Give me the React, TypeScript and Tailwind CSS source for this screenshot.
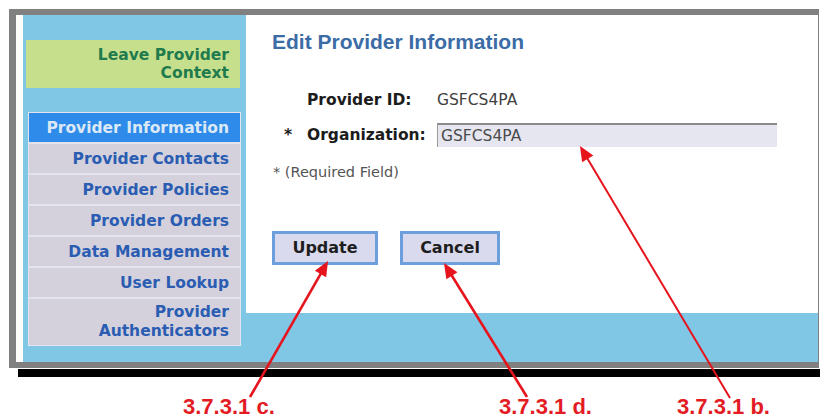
const navItems = [
  "Provider Contacts",
  "Provider Policies",
  "Provider Orders",
  "Data Management",
  "User Lookup",
]

function Arrow({ x1, y1, x2, y2, w }: { x1: number; y1: number; x2: number; y2: number; w: number }) {
  // arrowhead drawn as a triangle at (x2, y2)
  const dx = x2 - x1
  const dy = y2 - y1
  const len = Math.sqrt(dx * dx + dy * dy)
  const ux = dx / len
  const uy = dy / len
  const hl = 15
  const hw = 6.5
  const bx = x2 - ux * hl
  const by = y2 - uy * hl
  const pts = `${x2},${y2} ${bx - uy * hw},${by + ux * hw} ${bx + uy * hw},${by - ux * hw}`
  return (
    <g>
      <line x1={x1} y1={y1} x2={bx + ux * 2} y2={by + uy * 2} stroke="#e5141d" strokeWidth={w} />
      <polygon points={pts} fill="#e5141d" />
    </g>
  )
}

export default function App() {
  return (
    <div className="relative w-[820px] h-[419px] overflow-hidden bg-white pl-[9px] pt-[9px] font-['DejaVu_Sans',sans-serif]">
      <div className="flex w-[810px] border-t-[6px] border-l-[7px] border-b-[6px] border-r border-[#808080]">
        <div className="w-[7px] bg-white" />
        <div className="flex h-[347px] flex-1 bg-[#80c7e6]">
          {/* sidebar */}
          <div className="flex w-[223px] flex-col">
            <div className="ml-[3px] mt-[25px] flex h-[48px] w-[214px] flex-col justify-center bg-[#c6df8c] pr-[11px] text-right text-[15.5px] font-bold leading-[18px] text-[#1f7b4d]">
              <span>Leave Provider</span>
              <span>Context</span>
            </div>
            <div className="ml-[5px] mt-[24px] flex w-[213px] flex-col gap-[2px] border border-[#e4e4ee] bg-[#e4e4ee] text-right text-[15.5px] font-bold leading-[18px]">
              <div className="flex h-[29px] items-center justify-end bg-[#2f8bea] pr-[11px] text-[#dbe9f7]">
                Provider Information
              </div>
              {navItems.map((t) => (
                <div key={t} className="flex h-[29px] items-center justify-end bg-[#d4d1dd] pr-[11px] text-[#2a5db2]">
                  {t}
                </div>
              ))}
              <div className="flex h-[46px] flex-col justify-center bg-[#d4d1dd] pr-[11px] leading-[19px] text-[#2a5db2]">
                <span>Provider</span>
                <span>Authenticators</span>
              </div>
            </div>
          </div>

          {/* main */}
          <div className="flex flex-1 flex-col">
            <div className="h-[298px] bg-white pl-[26px] pt-[15px]">
              <h1 className="font-['Liberation_Sans',Arial,sans-serif] text-[21px] font-bold leading-[24px] text-[#3b6ca6]">
                Edit Provider Information
              </h1>
              <div className="mt-[36px] ml-[12px] flex h-[20px] items-center text-[15.5px] leading-[20px]">
                <span className="w-[23px]" />
                <span className="w-[130px] font-bold text-[#1c1c1c]">Provider ID:</span>
                <span className="text-[#404040]">GSFCS4PA</span>
              </div>
              <div className="mt-[13px] ml-[12px] flex h-[24px] items-center text-[15.5px] leading-[20px]">
                <span className="w-[23px] font-bold text-[#1c1c1c]">*</span>
                <span className="w-[130px] font-bold text-[#1c1c1c]">Organization:</span>
                <div className="flex h-[24px] w-[340px] items-center border-t-2 border-l border-t-[#8b8b8b] border-l-[#9a9a9a] bg-[#e6e6f0] pl-[3px] text-[#4a4a4a]">
                  GSFCS4PA
                </div>
              </div>
              <p className="mt-[16px] ml-[1px] text-[14.5px] leading-[18px] text-[#555]">* (Required Field)</p>
              <div className="mt-[50px] flex gap-[22px] text-[16px] font-bold text-[#1e1e1e]">
                <button className="flex h-[34px] w-[106px] items-center justify-center border-[3px] border-[#6d9fdd] bg-[#dadaee]">
                  Update
                </button>
                <button className="flex h-[34px] w-[100px] items-center justify-center border-[3px] border-[#6d9fdd] bg-[#dadaee]">
                  Cancel
                </button>
              </div>
            </div>
          </div>
        </div>
      </div>
      <div className="ml-[9px] mt-[1px] h-[8px] bg-black" />

      {/* annotations */}
      <svg className="pointer-events-none absolute left-0 top-0" width="820" height="419">
        <Arrow x1={250} y1={397} x2={328} y2={261} w={2.6} />
        <Arrow x1={527} y1={397} x2={444} y2={263} w={2.6} />
        <Arrow x1={730} y1={398} x2={580} y2={146} w={2} />
      </svg>
      <span className="absolute left-[183px] top-[396px] font-['Liberation_Sans',Arial,sans-serif] text-[22px] font-bold leading-[22px] text-[#e31b23]">
        3.7.3.1 c.
      </span>
      <span className="absolute left-[499px] top-[396px] font-['Liberation_Sans',Arial,sans-serif] text-[22px] font-bold leading-[22px] text-[#e31b23]">
        3.7.3.1 d.
      </span>
      <span className="absolute left-[677px] top-[396px] font-['Liberation_Sans',Arial,sans-serif] text-[22px] font-bold leading-[22px] text-[#e31b23]">
        3.7.3.1 b.
      </span>
    </div>
  )
}
